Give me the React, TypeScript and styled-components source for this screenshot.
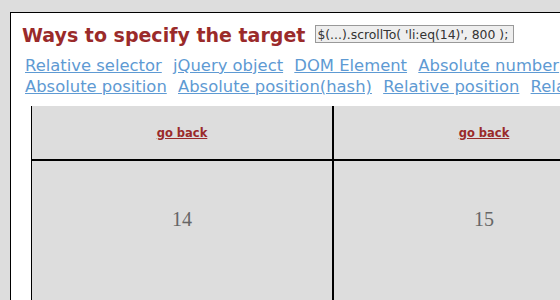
import React from 'react';
import styled, { createGlobalStyle } from 'styled-components';

const GlobalStyle = createGlobalStyle`
    html, body {
        margin: 0;
        padding: 0;
        background: #dddddd;
        overflow: hidden;
    }
`

const Page = styled.div`
    padding: 12px 0 0 10px;
    height: 300px;
    box-sizing: border-box;
`

const Panel = styled.div`
    width: 700px;
    height: 400px;
    background: #fff;
    border-top: 1px solid #000;
    border-left: 1px solid #000;
    padding: 10px 0 0 11px;
    box-sizing: border-box;
    font-family: "DejaVu Sans", Verdana, sans-serif;
`

const TitleRow = styled.div`
    display: flex;
    align-items: flex-start;
    gap: 10px;
    height: 24px;
`

const Title = styled.h1`
    margin: 0;
    font-size: 19px;
    line-height: 24px;
    font-weight: bold;
    color: #9a2a2a;
`

const Code = styled.input`
    margin-top: 2px;
    width: 199px;
    height: 18px;
    box-sizing: border-box;
    padding: 0 0 0 1px;
    border: 1px solid #999;
    background: #eeeeee;
    color: #333;
    font-family: "DejaVu Sans", Verdana, sans-serif;
    font-size: 12.4px;
    outline: none;
`

const Links = styled.div`
    margin: 8px 0 0 3px;
    font-size: 16.4px;
    line-height: 21px;
`

const LinkLine = styled.div`
    white-space: nowrap;
`

const Link = styled.a`
    color: #5e9ad3;
    text-decoration: underline;
    margin-right: 6px;
    cursor: pointer;
`

const Pane = styled.div`
    margin: 9px 0 0 9px;
    display: grid;
    grid-template-columns: repeat(3, 302px);
`

const Cell = styled.div<{ $top?: boolean }>`
    box-sizing: border-box;
    background: #dddddd;
    border: 1px solid #000;
    ${p => p.$top ? `
        border-top: none;
        height: 54px;
        display: flex;
        align-items: center;
        justify-content: center;
    ` : `
        height: 220px;
        padding-top: 46px;
        text-align: center;
    `}
`

const Back = styled.a`
    color: #9a2a2a;
    font-size: 11.5px;
    font-weight: bold;
    text-decoration: underline;
    cursor: pointer;
`

const Num = styled.span`
    font-family: "Liberation Serif", "Times New Roman", serif;
    font-size: 20px;
    line-height: 24px;
    color: #666;
`

const targetLines = [
    ['Relative selector', 'jQuery object', 'DOM Element', 'Absolute number'],
    ['Absolute position', 'Absolute position(hash)', 'Relative position', 'Relative position(hash)'],
]

export default function App() {
    return (
        <Page>
            <GlobalStyle />
            <Panel>
                <TitleRow>
                    <Title>Ways to specify the target</Title>
                    <Code readOnly defaultValue="$(...).scrollTo( 'li:eq(14)', 800 );" />
                </TitleRow>
                <Links>
                    {targetLines.map((line, i) => (
                        <LinkLine key={i}>
                            {line.map(t => (
                                <React.Fragment key={t}>
                                    <Link>{t}</Link>{' '}
                                </React.Fragment>
                            ))}
                        </LinkLine>
                    ))}
                </Links>
                <Pane>
                    {[0, 1, 2].map(i => (
                        <Cell key={'b' + i} $top><Back>go back</Back></Cell>
                    ))}
                    {[14, 15, 16].map(n => (
                        <Cell key={n}><Num>{n}</Num></Cell>
                    ))}
                </Pane>
            </Panel>
        </Page>
    )
}
